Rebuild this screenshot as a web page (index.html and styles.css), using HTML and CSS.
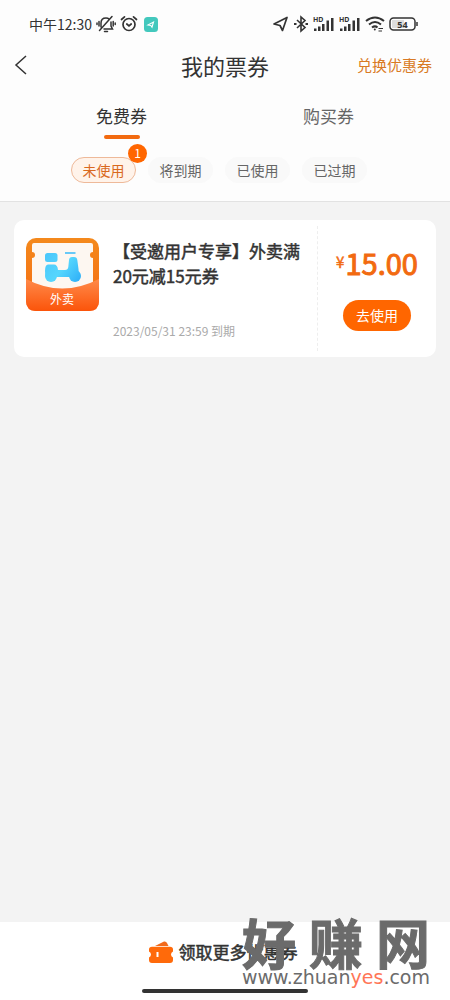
FILE: index.html
```html
<!DOCTYPE html>
<html lang="zh-CN">
<head>
<meta charset="utf-8">
<meta name="viewport" content="width=device-width, initial-scale=1">
<title>我的票券</title>
<link rel="stylesheet" href="styles.css">
</head>
<body>
<header class="top">
  <div class="status">
    <div class="status-left">
      <span class="clock">中午12:30</span>
      <svg width="20" height="18" viewBox="0 0 20 18" fill="none" stroke="#333" stroke-width="1.500" stroke-linecap="round"><path d="M5 12V8Q5 3 10 3Q12 3 13 4M15 7V11L16.500 14H8M8.500 16.500H11.500M3.500 15.500L16 1.500M3 6.500V11M1 8V9.500M17.200 6.500V11M19.200 8V9.500"/></svg>
      <svg class="alarm" width="18" height="18" viewBox="0 0 18 18" fill="none" stroke="#333" stroke-width="1.700" stroke-linecap="round"><circle cx="9" cy="9.500" r="6"/><path d="M1.500 4.500L4.500 1.800M16.500 4.500L13.500 1.800M6.800 9L9 10.800L11.200 9"/></svg>
      <svg width="14" height="15" viewBox="0 0 14 15"><rect width="14" height="15" rx="3.500" fill="#43c8bd"/><path d="M4 8L9.500 5L8 10.200L6.800 8.400Z" fill="none" stroke="#fff" stroke-width="1.100"/></svg>
    </div>
    <div class="status-right">
      <svg width="17" height="18" viewBox="0 0 17 18" fill="none" stroke="#333" stroke-width="1.700" stroke-linejoin="round"><path d="M2 9L15 2.500L10.500 15.500L8 10.500Z"/></svg>
      <svg width="16" height="18" viewBox="0 0 16 18" fill="none" stroke="#333" stroke-width="1.600"><path d="M4 5L12 12.500L8 16V2L12 5.500L4 13"/><path d="M1 9H3.500M12.500 9H15" stroke-width="2.200"/></svg>
      <svg width="22" height="18" viewBox="0 0 22 18" fill="#333"><text class="hd" x="0" y="7">HD</text><path d="M1 13.500h2.500V16H1zM5 11.500h2.500V16H5zM9 9h2.500v7H9zM13.500 5.500H16V16h-2.500zM18 3h2.500v13H18z"/></svg>
      <svg width="22" height="18" viewBox="0 0 22 18" fill="#333"><text class="hd" x="0" y="7">HD</text><path d="M1 13.500h2.500V16H1zM5 11.500h2.500V16H5zM9 9h2.500v7H9zM13.500 5.500H16V16h-2.500zM18 3h2.500v13H18z"/></svg>
      <svg width="20" height="18" viewBox="0 0 20 18" fill="none" stroke="#333" stroke-width="2"><path d="M1 6Q10-1 19 6M4 9.500Q10 4.500 16 9.500M7 12.500Q10 10.200 12.500 12.500"/><circle cx="9.800" cy="14.500" r="1" fill="#333" stroke="none"/><path d="M13.500 13.500H18M13.500 16H17" stroke-width="1.100"/></svg>
      <svg width="30" height="18" viewBox="0 0 30 18"><rect x="1" y="3" width="25" height="12" rx="3.500" fill="none" stroke="#333" stroke-width="1.500"/><path d="M3 5H15V13H3Z" fill="#ddd"/><path d="M28 7V11" stroke="#333" stroke-width="1.500"/><text class="battery" x="13.500" y="12.500" text-anchor="middle">54</text></svg>
    </div>
  </div>
  <div class="nav">
    <button class="back" aria-label="返回"><svg width="14" height="22" viewBox="0 0 14 22" fill="none" stroke="#333" stroke-width="1.500"><path d="M12 2L2 11L12 20"/></svg></button>
    <h1 class="page-title">我的票券</h1>
    <a class="redeem" href="#redeem">兑换优惠券</a>
  </div>
  <div class="tabs">
    <button class="tab tab-active">免费券</button>
    <button class="tab">购买券</button>
  </div>
  <div class="chips">
    <button class="chip chip-active">未使用<span class="badge">1</span></button>
    <button class="chip">将到期</button>
    <button class="chip">已使用</button>
    <button class="chip">已过期</button>
  </div>
</header>
<main class="content">
  <article class="coupon">
    <svg class="thumb" width="73" height="73" viewBox="0 0 73 73">
      <defs>
        <linearGradient id="edge" x1="0" y1="0" x2="0" y2="1"><stop offset="0" stop-color="#f4891c"/><stop offset="1" stop-color="#f56a12"/></linearGradient>
        <linearGradient id="pocket" x1="0" y1="0" x2="0" y2="1"><stop offset="0" stop-color="#ff8a4a"/><stop offset="1" stop-color="#fb540a"/></linearGradient>
        <linearGradient id="bike" gradientUnits="userSpaceOnUse" x1="20" y1="18" x2="52" y2="44"><stop offset="0" stop-color="#4cc8fb"/><stop offset=".5" stop-color="#56d6fd"/><stop offset="1" stop-color="#30b1f8"/></linearGradient>
      </defs>
      <rect width="73" height="73" rx="10" fill="url(#edge)"/>
      <path d="M8 5H65Q67 5 67 7V14A3 3 0 0 0 67 20V52H6V20A3 3 0 0 0 6 14V7Q6 5 8 5Z" fill="#fdf7f1"/>
      <path d="M0 41Q36 60 73 41V63Q73 73 63 73H10Q0 73 0 63Z" fill="url(#pocket)"/>
      <g fill="url(#bike)">
        <rect x="19" y="15" width="12.500" height="9" rx="2.500"/>
        <path d="M22 26.500H28Q31.500 26.500 32 32H39Q42 32 42.300 29L43 22Q43.300 19 46 19H48Q51 19 51.300 22L52.500 31L53 39H20Q19 37 19 33Q19 26.500 22 26.500Z"/>
        <circle cx="25" cy="38" r="6"/><circle cx="49" cy="38" r="6"/>
      </g>
      <path d="M39 15H49.500" stroke="#68c9f7" stroke-width="2"/>
      <text class="thumb-label" x="36" y="66" text-anchor="middle">外卖</text>
    </svg>
    <div class="info">
      <h2 class="coupon-title">【受邀用户专享】外卖满20元减15元券</h2>
      <p class="expiry">2023/05/31 23:59 到期</p>
    </div>
    <div class="side">
      <p class="price"><span class="yen">¥</span><span>15.00</span></p>
      <button class="use">去使用</button>
    </div>
  </article>
</main>
<footer class="bottom">
  <button class="more">
    <svg width="24" height="24" viewBox="0 0 24 24"><path d="M6 6L15 1.500Q17 1 18 3L19.500 6Z" fill="#f26a1b"/><path d="M3 6.800H21Q24 6.800 24 9.500V11.500Q22 12.500 22 14.500Q22 16.500 24 17.500V20Q24 23 21 23H3Q0 23 0 20V17.500Q2 16.500 2 14.500Q2 12.500 0 11.500V9.500Q0 6.800 3 6.800Z" fill="#ff6a0a"/><path d="M8.500 12V17" stroke="#fff" stroke-width="2"/></svg>
    <span>领取更多优惠券</span>
  </button>
  <div class="home-bar"></div>
  <div class="watermark">
    <div class="mark-name"><span>好</span><span>赚</span><span>网</span></div>
    <div class="mark-url">www.zhuan<span class="mark-hot">yes</span>.com</div>
  </div>
</footer>
</body>
</html>
```
FILE: styles.css
```css
* { box-sizing: border-box; }
body {
  margin: 0;
  min-height: 100vh;
  display: flex;
  flex-direction: column;
  background: #f3f3f3;
  color: #333;
  font-family: "Noto Sans CJK SC", sans-serif;
}
h1, h2, p { margin: 0; font-weight: 400; }
button { border: 0; padding: 0; margin: 0; background: none; color: inherit; font: inherit; }
svg { display: block; flex: none; }
.top { background: #fdfdfd; border-bottom: 1px solid #e2e2e2; padding-bottom: 18px; }
.status { display: flex; justify-content: space-between; align-items: center; height: 32px; padding: 16px 31px 0 29px; }
.status-left, .status-right { display: flex; align-items: center; gap: 4px; }
.clock { font-size: 14px; line-height: 18px; }
.alarm { margin-right: 2px; }
.hd { font: 700 7px "Noto Sans", sans-serif; }
.battery { font: 700 9px "Noto Sans", sans-serif; fill: #333; }
.nav { display: grid; grid-template-columns: 1fr auto 1fr; align-items: center; height: 65px; padding: 0 18px 0 14px; }
.back { justify-self: start; }
.page-title { padding-left: 4px; font-size: 22px; line-height: 32px; }
.redeem { justify-self: end; color: #d97a24; font-size: 15px; line-height: 24px; text-decoration: none; }
.tabs { display: grid; grid-template-columns: 1fr 1fr; padding: 0 18px; }
.tab { display: flex; flex-direction: column; align-items: center; gap: 7px; padding-top: 7px; color: #666; font-size: 17px; line-height: 24px; }
.tab-active { color: #333; }
.tab-active::after { content: ""; width: 36px; height: 4px; border-radius: 2px; background: #f26a10; }
.chips { display: flex; justify-content: center; gap: 12px; padding: 18px 12px 0 0; }
.chip { position: relative; width: 65px; height: 26px; border: 1px solid #f9f9f9; border-radius: 13px; background: #f9f9f9; color: #666; font-size: 14px; line-height: 24px; }
.chip-active { border-color: #eeb999; background: #fff3ea; color: #d9691e; }
.badge { position: absolute; top: -14px; right: -12px; width: 19px; height: 19px; border-radius: 50%; background: #ff6600; color: #fff; font-size: 12px; line-height: 18px; }
.content { flex: 1; padding: 18px 14px; }
.coupon { display: flex; min-height: 137px; border-radius: 10px; background: #fff; }
.thumb { margin: 18px 14px 0 12px; }
.thumb-label { font-size: 12px; fill: #fff; }
.info { flex: 1; display: flex; flex-direction: column; justify-content: space-between; padding: 18px 16px 16px 0; }
.coupon-title { font-size: 17px; line-height: 25px; -webkit-text-stroke: 0.500px #333; }
.expiry { color: #aaa; font-size: 12px; line-height: 20px; }
.side { display: flex; flex-direction: column; align-items: center; width: 119px; margin: 6px 0; padding-top: 18px; border-left: 1px dashed #eee; }
.price { display: flex; align-items: center; gap: 1px; height: 36px; color: #f26a10; font-size: 29px; line-height: 36px; -webkit-text-stroke: 1px #f26a10; }
.yen { font-size: 15px; -webkit-text-stroke-width: 0.500px; }
.use { width: 68px; height: 31px; margin-top: 20px; border-radius: 16px; background: #ff6600; color: #fff; font-size: 14px; line-height: 31px; }
.bottom { position: relative; display: flex; flex-direction: column; align-items: center; justify-content: space-between; height: 78px; padding: 18px 0 7px; background: #fff; }
.more { display: flex; align-items: center; gap: 6px; height: 24px; padding-right: 4px; font-size: 17px; line-height: 24px; -webkit-text-stroke: 0.500px #333; }
.home-bar { width: 166px; height: 4px; border-radius: 2px; background: #333; }
.watermark { position: absolute; top: -3px; right: 20px; color: #6b6b6b; }
.mark-name { display: flex; justify-content: space-between; font-size: 54px; font-weight: 700; line-height: 46px; -webkit-text-stroke: 1px #6b6b6b; }
.mark-url { font: 19px/24px "DejaVu Sans", sans-serif; }
.mark-hot { color: #ff7657; }
```
